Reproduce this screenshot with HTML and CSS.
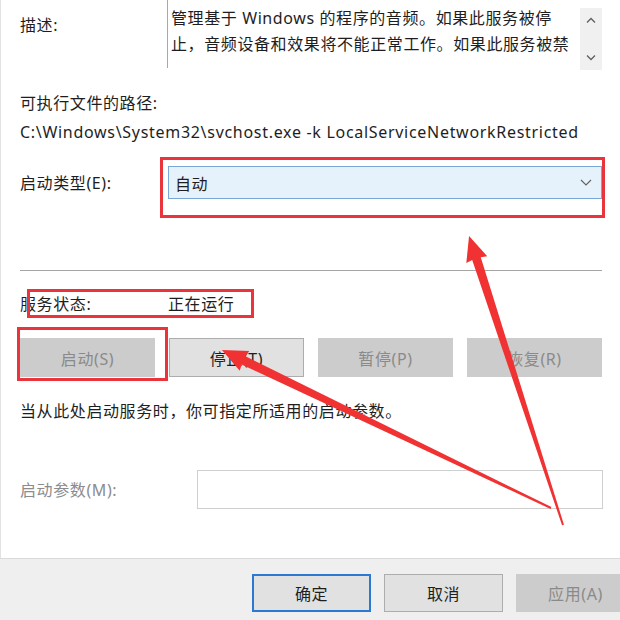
FILE: index.html
```html
<!DOCTYPE html>
<html lang="zh-CN">
<head>
    <meta charset="UTF-8">
    <title>服务属性</title>
    <link rel="stylesheet" href="styles.css">
</head>
<body>

<div class="dialog">
    <div class="content">
        <!-- 描述 -->
        <div class="desc-row">
            <div class="label desc-label">描述:</div>
            <div class="desc-box">
                <div class="desc-text">
                    <div>管理基于 Windows 的程序的音频。如果此服务被停</div>
                    <div>止，音频设备和效果将不能正常工作。如果此服务被禁</div>
                </div>
                <div class="scrollbar">
                    <svg width="10" height="6" viewBox="0 0 10 6"><path d="M1 5.5 L5 1.5 L9 5.5" fill="none" stroke="#606060" stroke-width="1.3"/></svg>
                    <svg width="10" height="6" viewBox="0 0 10 6"><path d="M1 0.5 L5 4.5 L9 0.5" fill="none" stroke="#606060" stroke-width="1.3"/></svg>
                </div>
            </div>
        </div>

        <!-- 路径 -->
        <div class="path-block">
            <div class="label">可执行文件的路径:</div>
            <div class="path">C:\Windows\System32\svchost.exe -k LocalServiceNetworkRestricted</div>
        </div>

        <!-- 启动类型 -->
        <div class="form-row type-row">
            <div class="label">启动类型(E):</div>
            <div class="select">
                <span>自动</span>
                <svg width="12" height="7" viewBox="0 0 12 7"><path d="M1 1 L6 6 L11 1" fill="none" stroke="#606060" stroke-width="1.1"/></svg>
            </div>
        </div>

        <div class="sep"></div>

        <!-- 服务状态 -->
        <div class="form-row status-row">
            <div class="label">服务状态:</div>
            <div class="status-value">正在运行</div>
        </div>

        <div class="btn-row">
            <div class="btn disabled">启动(S)</div>
            <div class="btn">停止(T)</div>
            <div class="btn disabled">暂停(P)</div>
            <div class="btn disabled">恢复(R)</div>
        </div>

        <p class="hint">当从此处启动服务时，你可指定所适用的启动参数。</p>

        <div class="form-row param-row">
            <div class="label muted">启动参数(M):</div>
            <div class="input"></div>
        </div>
    </div>

    <!-- 底部按钮 -->
    <div class="footer">
        <div class="btn wide default">确定</div>
        <div class="btn wide">取消</div>
        <div class="btn wide disabled">应用(A)</div>
    </div>

    <!-- 标注 -->
    <div class="mark mark-type"></div>
    <div class="mark mark-status"></div>
    <div class="mark mark-start"></div>
    <svg class="arrows" width="620" height="620" viewBox="0 0 620 620">
        <polygon transform="translate(563 525) rotate(-108)" points="0,-1 280,-4.5 279,-11 304,0 279,11 280,4.5 0,1"/>
        <polygon transform="translate(551 508) rotate(-154.35)" points="0,-1 341,-4.5 340,-11 365,0 340,11 341,4.5 0,1"/>
    </svg>
</div>

</body>
</html>
```

FILE: styles.css
```css
body {
    margin: 0;
    padding: 0;
    background: #fff;
    font-family: "Noto Sans", "Noto Sans CJK SC", sans-serif;
    font-size: 16px;
    letter-spacing: 0.6px;
    color: #1e1e1e;
}

.dialog {
    position: relative;
    width: 620px;
    height: 620px;
    overflow: hidden;
    background: #fff;
}

.content {
    height: 558px;
    border-left: 1px solid #e2e2e2;
    box-sizing: border-box;
    padding-left: 19px;
}

.label {
    line-height: 22px;
    white-space: nowrap;
}

.muted {
    color: #8c8c8c;
}

/* 描述 */
.desc-row {
    display: flex;
    height: 68px;
}

.desc-label {
    width: 147px;
    padding-top: 14px;
}

.desc-box {
    display: flex;
    width: 434px;
    border-left: 1px solid #a8a8a8;
}

.desc-text {
    flex: 1;
    padding: 5px 0 0 3px;
    line-height: 26px;
    white-space: nowrap;
    overflow: hidden;
}

.scrollbar {
    width: 22px;
    margin-top: 8px;
    height: 62px;
    background: #f0f0f0;
    display: flex;
    flex-direction: column;
    align-items: center;
    justify-content: space-between;
    padding: 9px 0 9px;
    box-sizing: border-box;
    flex-shrink: 0;
}

/* 路径 */
.path-block {
    padding-top: 24px;
}

.path {
    margin-top: 7px;
    line-height: 22px;
    white-space: nowrap;
    letter-spacing: 0.7px;
}

/* 表单行 */
.form-row {
    display: flex;
    align-items: center;
}

.form-row .label {
    width: 148px;
}

.type-row {
    margin-top: 23px;
}

.select {
    width: 434px;
    height: 33px;
    box-sizing: border-box;
    background: #e5f1fb;
    border: 1px solid #7aa7d6;
    display: flex;
    align-items: center;
    justify-content: space-between;
    padding: 0 9px 0 6px;
}

.sep {
    margin-top: 71px;
    width: 582px;
    height: 1px;
    background: #a6a6a6;
}

.status-row {
    margin-top: 22px;
    line-height: 22px;
}

.btn-row {
    display: flex;
    gap: 14px;
    margin-top: 23px;
}

.btn {
    width: 135px;
    height: 39px;
    box-sizing: border-box;
    background: #e1e1e1;
    border: 1px solid #adadad;
    display: flex;
    align-items: center;
    justify-content: center;
    flex-shrink: 0;
}

.btn.disabled {
    background: #cccccc;
    border-color: #cccccc;
    color: #8a8a8a;
}

.hint {
    margin: 23px 0 0;
    line-height: 22px;
}

.param-row {
    margin-top: 48px;
}

.param-row .label {
    width: 177px;
}

.input {
    width: 406px;
    height: 39px;
    box-sizing: border-box;
    border: 1px solid #cfcfcf;
}

/* 底部 */
.footer {
    height: 62px;
    box-sizing: border-box;
    border-top: 1px solid #dadada;
    background: #efefef;
    display: flex;
    gap: 13px;
    padding: 15px 0 0 252px;
}

.btn.wide {
    width: 119px;
    height: 38px;
}

.btn.default {
    border: 2px solid #2a7ad2;
}

/* 红色标注 */
.mark {
    position: absolute;
    border: 3px solid #e8343a;
    box-sizing: border-box;
}

.mark-type {
    left: 160px;
    top: 157px;
    width: 445px;
    height: 61px;
}

.mark-status {
    left: 27px;
    top: 289px;
    width: 227px;
    height: 29px;
}

.mark-start {
    left: 17px;
    top: 327px;
    width: 151px;
    height: 54px;
}

.arrows {
    position: absolute;
    left: 0;
    top: 0;
    fill: #f03232;
}
```
